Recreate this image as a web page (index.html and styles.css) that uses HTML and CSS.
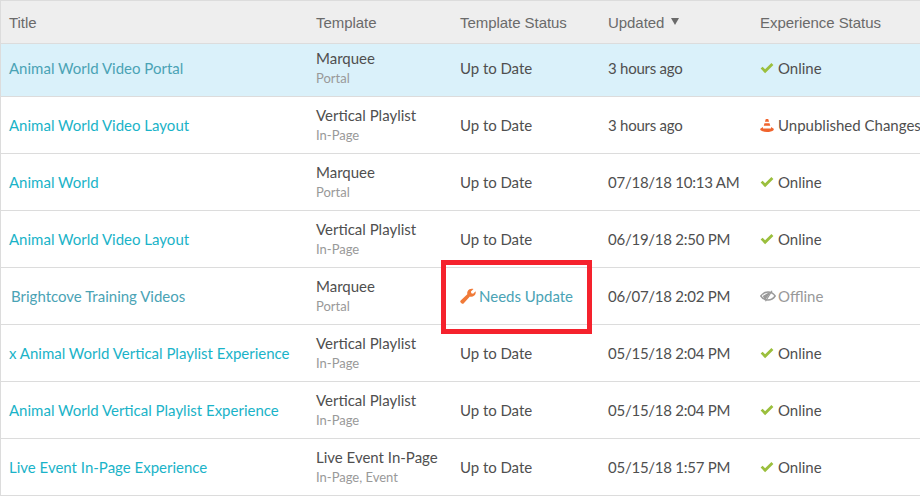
FILE: index.html
```html
<!DOCTYPE html>
<html lang="en">
<head>
<meta charset="utf-8">
<title>Experiences</title>
<link rel="stylesheet" href="styles.css">
</head>
<body>
<svg class="defs" width="0" height="0" aria-hidden="true">
  <symbol id="check" viewBox="0 0 14 12"><path d="M0.6 6.6 L2.6 4.700 L5.100 7.200 L11.400 0.900 L13.400 2.900 L5.100 11.200 Z" fill="#9bbf3d"/></symbol>
  <symbol id="cone" viewBox="0 0 15 15"><path d="M6.200 0.500h2.600l0.900 3H5.300z M4.800 5.200h5.400l0.800 2.700H4z M3.200 9.200L0.300 11v1.300C2 13.800 4.600 14.500 7.500 14.500S13 13.800 14.700 12.300V11L11.800 9.200v1.600H3.200z" fill="#f0642d"/></symbol>
  <symbol id="eye" viewBox="0 0 16 12"><path d="M0.800 6C2.600 3.400 5.200 2 8 2S13.400 3.400 15.200 6C13.400 8.600 10.800 10 8 10S2.600 8.600 0.800 6Z" fill="none" stroke="#999" stroke-width="1.400"/><path d="M2.800 6L8.800 2.500L10 3.400L5.500 9.500H4.500Z" fill="#999"/><path d="M12 0.800L5.500 11.200" stroke="#999" stroke-width="1.200"/></symbol>
  <symbol id="wrench" viewBox="0 0 16 16"><path d="M0.700 12.400L7.300 6.300C6.900 4.300 7.600 2.400 9.400 1.300C10.800 0.500 12.300 0.500 13.500 1L10.900 3.500L11.300 5.300L13.100 5.800L15.600 3.300C16 4.800 15.600 6.500 14.300 7.600C13 8.700 11.300 9 9.900 8.600L3.800 15.300C3.100 16 2.200 16 1.500 15.300L0.700 14.500C0.100 13.900 0.100 13 0.700 12.400Z" fill="#f07a38"/></symbol>
</svg>
<main class="table">
  <div class="row head">
    <div>Title</div>
    <div>Template</div>
    <div>Template Status</div>
    <div class="sorted">Updated<svg class="sort" viewBox="0 0 8 7"><path d="M0 0H8L4 7Z"/></svg></div>
    <div>Experience Status</div>
  </div>

  <div class="row selected">
    <a class="title muted">Animal World Video Portal</a>
    <div class="tpl"><span>Marquee</span><small>Portal</small></div>
    <div class="cell">Up to Date</div>
    <div class="date">3 hours ago</div>
    <div class="status"><svg class="ico-check"><use href="#check"/></svg>Online</div>
  </div>

  <div class="row">
    <a class="title">Animal World Video Layout</a>
    <div class="tpl"><span>Vertical Playlist</span><small>In-Page</small></div>
    <div class="cell">Up to Date</div>
    <div class="date">3 hours ago</div>
    <div class="status"><svg class="ico-cone"><use href="#cone"/></svg>Unpublished Changes</div>
  </div>

  <div class="row">
    <a class="title">Animal World</a>
    <div class="tpl"><span>Marquee</span><small>Portal</small></div>
    <div class="cell">Up to Date</div>
    <div class="date">07/18/18 10:13 AM</div>
    <div class="status"><svg class="ico-check"><use href="#check"/></svg>Online</div>
  </div>

  <div class="row">
    <a class="title">Animal World Video Layout</a>
    <div class="tpl"><span>Vertical Playlist</span><small>In-Page</small></div>
    <div class="cell">Up to Date</div>
    <div class="date">06/19/18 2:50 PM</div>
    <div class="status"><svg class="ico-check"><use href="#check"/></svg>Online</div>
  </div>

  <div class="row">
    <a class="title muted inset">Brightcove Training Videos</a>
    <div class="tpl"><span>Marquee</span><small>Portal</small></div>
    <div class="status needs"><svg class="ico-wrench"><use href="#wrench"/></svg>Needs Update</div>
    <div class="date">06/07/18 2:02 PM</div>
    <div class="status offline"><svg class="ico-eye"><use href="#eye"/></svg>Offline</div>
  </div>

  <div class="row">
    <a class="title">x Animal World Vertical Playlist Experience</a>
    <div class="tpl"><span>Vertical Playlist</span><small>In-Page</small></div>
    <div class="cell">Up to Date</div>
    <div class="date">05/15/18 2:04 PM</div>
    <div class="status"><svg class="ico-check"><use href="#check"/></svg>Online</div>
  </div>

  <div class="row">
    <a class="title">Animal World Vertical Playlist Experience</a>
    <div class="tpl"><span>Vertical Playlist</span><small>In-Page</small></div>
    <div class="cell">Up to Date</div>
    <div class="date">05/15/18 2:04 PM</div>
    <div class="status"><svg class="ico-check"><use href="#check"/></svg>Online</div>
  </div>

  <div class="row">
    <a class="title">Live Event In-Page Experience</a>
    <div class="tpl"><span>Live Event In-Page</span><small>In-Page, Event</small></div>
    <div class="cell">Up to Date</div>
    <div class="date">05/15/18 1:57 PM</div>
    <div class="status"><svg class="ico-check"><use href="#check"/></svg>Online</div>
  </div>

  <div class="callout"></div>
</main>
</body>
</html>
```

FILE: styles.css
```css
* { box-sizing: border-box; }

html, body {
  margin: 0;
  padding: 0;
  background: #fff;
  overflow: hidden;
}

body {
  width: 920px;
  height: 496px;
  font-family: Lato, "Liberation Sans", sans-serif;
  font-size: 15px;
  color: #4f4f4f;
}

.defs { position: absolute; }

.table {
  position: relative;
  width: 920px;
  border-top: 1px solid #dcdcdc;
  border-left: 1px solid #dcdcdc;
}

.row {
  display: grid;
  grid-template-columns: 307px 144px 148px 152px 1fr;
  align-items: center;
  height: 57px;
  padding-left: 8px;
  border-bottom: 1px solid #dcdcdc;
  white-space: nowrap;
}

.head {
  height: 43px;
  background: #eeeeee;
  font-family: "Liberation Sans", Arial, sans-serif;
  font-size: 15px;
  letter-spacing: -0.05px;
  color: #6a6a6a;
}

.sorted {
  display: flex;
  align-items: center;
}

.sort {
  width: 8px;
  height: 7px;
  margin-left: 7px;
  margin-top: -2px;
  fill: #6a6a6a;
}

.selected {
  height: 53px;
  padding-bottom: 4px;
  background: #daf1fa;
}

.title { color: #1ab3c8; }
.muted { color: #4aa3b5; }
.inset { padding-left: 2px; }

.cell { letter-spacing: -0.05px; }

.date {
  font-feature-settings: "tnum" 1;
  letter-spacing: -0.25px;
}

.tpl {
  display: flex;
  flex-direction: column;
  line-height: 20px;
}

.tpl small {
  font-size: 13px;
  color: #999;
}

.status {
  display: flex;
  align-items: center;
}

.ico-check { width: 14px; height: 12px; margin-right: 4px; }
.ico-cone { width: 14px; height: 15px; margin-right: 4px; }
.ico-eye { width: 16px; height: 12px; margin-right: 2px; }
.ico-wrench { width: 16px; height: 16px; margin-right: 3px; }

.needs { color: #4aa3b5; }
.offline { color: #999; }

.callout {
  position: absolute;
  left: 440px;
  top: 259px;
  width: 151px;
  height: 74px;
  border: 5px solid #f5222d;
}
```
